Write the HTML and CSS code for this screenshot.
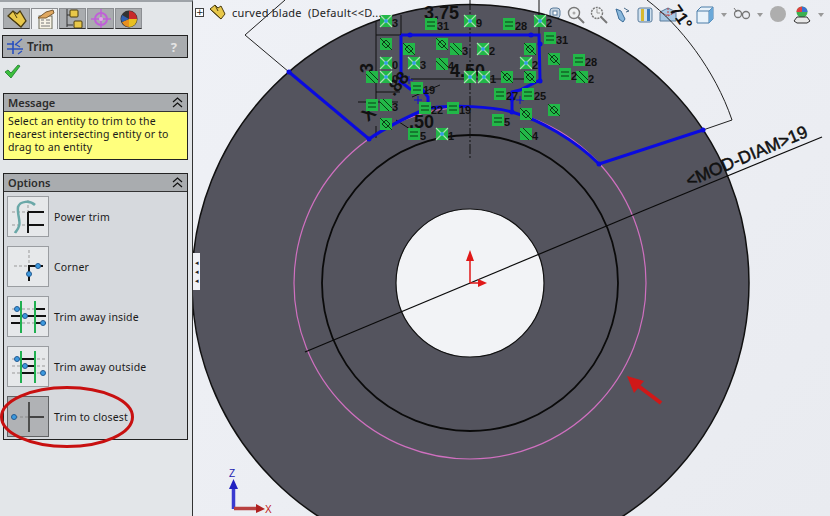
FILE: index.html
```html
<!DOCTYPE html>
<html lang="en">

<head>
    <meta charset="UTF-8">
    <title>Trim</title>
    <link rel="stylesheet" href="styles.css">
</head>

<body>
    <div class="app">
        <aside class="sidebar">
            <div class="tabs">
                <div class="tab">
                    <svg width="24" height="22" viewBox="0 0 24 22"><path d="M3 8l5-5 4 3 3-3 6 10-5 6z" fill="#e8c84a" stroke="#4a3c10" stroke-width="1.300"/><path d="M3 8l13 11M8 3l4 7" stroke="#4a3c10" fill="none"/></svg>
                </div>
                <div class="tab active">
                    <svg width="24" height="22" viewBox="0 0 24 22"><rect x="6" y="8" width="13" height="13" fill="#f7f3e6" stroke="#6a6a5a"/><path d="M8 12h3M8 15h3M13 12h4M13 15h4M8 18h9" stroke="#777"/><path d="M5 10l8-6 7-2 1 3-8 5z" fill="#e0a860" stroke="#7a5a30"/></svg>
                </div>
                <div class="tab">
                    <svg width="24" height="22" viewBox="0 0 24 22"><path d="M6 1v18M6 7h6M6 17h6" stroke="#333" fill="none"/><rect x="9" y="2" width="8" height="7" rx="1" fill="#e8c84a" stroke="#4a3c10"/><rect x="13" y="13" width="8" height="7" rx="1" fill="#e8c84a" stroke="#4a3c10"/></svg>
                </div>
                <div class="tab">
                    <svg width="24" height="22" viewBox="0 0 24 22"><circle cx="12" cy="11" r="6" fill="none" stroke="#c060d8" stroke-width="2"/><path d="M12 1v20M2 11h20" stroke="#c060d8" stroke-width="1.500"/><circle cx="12" cy="11" r="2" fill="#e8a0f0"/></svg>
                </div>
                <div class="tab">
                    <svg width="24" height="22" viewBox="0 0 24 22"><circle cx="12" cy="11" r="8.500" fill="#333"/><path d="M12 11V3a8 8 0 0 1 8 8z" fill="#c82a2a"/><path d="M12 11h8a8 8 0 0 1-8 8z" fill="#e8c020"/><path d="M12 11v8a8 8 0 0 1-7-5z" fill="#e89020"/><path d="M12 11l-7 3a8 8 0 0 1 0-7z" fill="#3060b0"/></svg>
                </div>
            </div>

            <div class="title-bar">
                <svg width="19" height="17" viewBox="0 0 19 17"><path d="M1 6h7M1 11h16M7 3v13" stroke="#2a50c0" stroke-width="1.600" fill="none"/><path d="M9 7l7-6M9 6l5 3M12 16l4-3" stroke="#2a50c0" stroke-width="1.200" fill="none"/></svg>
                <span class="title-text">Trim</span>
                <span class="help">?</span>
            </div>

            <div class="ok-row">
                <svg width="17" height="15" viewBox="0 0 17 15"><path d="M1 8l3-2 3 3 7-8 2 1-9 12z" fill="#3cc03c" stroke="#1c7a2c" stroke-width="0.800"/></svg>
            </div>

            <section class="panel message-panel">
                <div class="panel-head">
                    <span>Message</span>
                    <svg class="chevrons" width="11" height="11" viewBox="0 0 11 11"><path d="M1 5l4.500-4 4.500 4M1 10l4.500-4 4.500 4" fill="none" stroke="#111" stroke-width="1.200"/></svg>
                </div>
                <p class="message">Select an entity to trim to the nearest intersecting entity or to drag to an entity</p>
            </section>

            <section class="panel options-panel">
                <div class="panel-head">
                    <span>Options</span>
                    <svg class="chevrons" width="11" height="11" viewBox="0 0 11 11"><path d="M1 5l4.500-4 4.500 4M1 10l4.500-4 4.500 4" fill="none" stroke="#111" stroke-width="1.200"/></svg>
                </div>
                <ul class="option-list">
                    <li class="option">
                        <span class="option-btn">
                            <svg width="40" height="39" viewBox="0 0 40 39"><path d="M4 15h16M4 28h16M20 3v12" stroke="#999" stroke-dasharray="3 2" fill="none"/><path d="M20 15v21M20 15h16M20 28h16" stroke="#111" stroke-width="2" fill="none"/><path d="M27 8C22 3 12 4 10 10 9 17 13 25 11 29 10 33 8 34 7 36" stroke="#6aa8a8" stroke-width="2.500" fill="none"/></svg>
                        </span>
                        <span>Power trim</span>
                    </li>
                    <li class="option">
                        <span class="option-btn">
                            <svg width="40" height="39" viewBox="1 1 40 39"><path d="M22 4v17M7 20h15" stroke="#999" stroke-dasharray="3 2" fill="none"/><path d="M36 20H22v15" stroke="#111" stroke-width="2" fill="none"/><circle cx="31" cy="20" r="2.500" fill="#3c9ae0" stroke="#245a90"/><circle cx="22" cy="28" r="2.500" fill="#3c9ae0" stroke="#245a90"/></svg>
                        </span>
                        <span>Corner</span>
                    </li>
                    <li class="option">
                        <span class="option-btn">
                            <svg width="40" height="39" viewBox="0 1 40 39"><path d="M4 13h33M4 27h33" stroke="#999" stroke-dasharray="3 2" fill="none"/><path d="M3 20h35M3 27h11M28 13h9M28 27h10" stroke="#111" stroke-width="1.800" fill="none"/><path d="M13 5v32M27 5v32" stroke="#20b050" stroke-width="2" fill="none"/><circle cx="9" cy="13" r="2.500" fill="#3c9ae0" stroke="#245a90"/><circle cx="17" cy="20" r="2.500" fill="#3c9ae0" stroke="#245a90"/><circle cx="35" cy="27" r="2.500" fill="#3c9ae0" stroke="#245a90"/></svg>
                        </span>
                        <span>Trim away inside</span>
                    </li>
                    <li class="option">
                        <span class="option-btn">
                            <svg width="40" height="39" viewBox="0 1 40 39"><path d="M4 13h33M4 20h33M4 27h33" stroke="#999" stroke-dasharray="3 2" fill="none"/><path d="M13 13h14M13 20h14M13 27h14" stroke="#111" stroke-width="1.800" fill="none"/><path d="M13 5v32M27 5v32" stroke="#20b050" stroke-width="2" fill="none"/><circle cx="9" cy="13" r="2.500" fill="#3c9ae0" stroke="#245a90"/><circle cx="17" cy="20" r="2.500" fill="#3c9ae0" stroke="#245a90"/><circle cx="35" cy="27" r="2.500" fill="#3c9ae0" stroke="#245a90"/></svg>
                        </span>
                        <span>Trim away outside</span>
                    </li>
                    <li class="option">
                        <span class="option-btn selected">
                            <svg width="40" height="39" viewBox="1 0 40 39"><path d="M8 20h14" stroke="#8a8a8a" stroke-dasharray="3 2" fill="none"/><path d="M22 5v30M22 20h15" stroke="#444" stroke-width="1.800" fill="none"/><circle cx="7" cy="20" r="2.500" fill="#3c9ae0" stroke="#245a90"/></svg>
                        </span>
                        <span>Trim to closest</span>
                    </li>
                </ul>
            </section>

            <svg class="callout" width="140" height="66" viewBox="0 0 140 66"><ellipse cx="67" cy="33" rx="65.500" ry="29.500" fill="none" stroke="#c81010" stroke-width="3"/></svg>
        </aside>

        <main class="viewport">
            <div class="view-tools">
                <svg class="tool" style="left:356px" width="12" height="14" viewBox="0 0 12 14"><rect x="1" y="2" width="10" height="10" rx="3" fill="#c5d3e0" stroke="#5a7c9c"/><rect x="4" y="5" width="4" height="4" fill="#fff" stroke="#5a7c9c"/></svg>
                <svg class="tool" style="left:374px" width="18" height="18" viewBox="0 0 18 18"><circle cx="7" cy="7" r="5.500" fill="#eef0f2" stroke="#777" stroke-width="1.400"/><path d="M11 11l6 6" stroke="#777" stroke-width="2"/><circle cx="7" cy="7" r="1.500" fill="#aaa"/></svg>
                <svg class="tool" style="left:397px" width="18" height="18" viewBox="0 0 18 18"><circle cx="7" cy="7" r="5.500" fill="#eef0f2" stroke="#777" stroke-width="1.400" stroke-dasharray="2 1"/><path d="M11 11l6 6" stroke="#777" stroke-width="2"/><path d="M7 3v4h3" stroke="#999" fill="none"/></svg>
                <svg class="tool" style="left:420px" width="18" height="18" viewBox="0 0 18 18"><path d="M3 3l5 2 4 8-2 3-4-3z" fill="#8ab8dc" stroke="#3a6c98"/><path d="M11 2l5 3-3 1" stroke="#4a6c88" fill="none"/></svg>
                <svg class="tool" style="left:444px" width="16" height="18" viewBox="0 0 16 18"><rect x="1" y="2" width="14" height="14" rx="2" fill="#cfe0ee" stroke="#5a7c9c"/><rect x="4" y="3" width="3" height="12" fill="#d8b830"/><rect x="10" y="3" width="3" height="12" fill="#3c7cc0"/></svg>
                <svg class="tool" style="left:466px" width="18" height="18" viewBox="0 0 18 18"><path d="M1 6l8-4 8 4v9H1z" fill="#a8c8e4" stroke="#5a7c9c"/><path d="M9 2v8M1 6l8 4 8-4" stroke="#c04040" fill="none" stroke-dasharray="2 1"/></svg>
                <svg class="tool" style="left:503px" width="18" height="18" viewBox="0 0 18 18"><path d="M1 5l4-4h12v12l-4 4H1z" fill="#e8f2fa" stroke="#4a7ca8"/><path d="M1 5h12v12M13 5l4-4" stroke="#4a7ca8" fill="none"/><path d="M13 5l4-4v12l-4 4z" fill="#6aa8d8"/></svg>
                <svg class="tool arrow" style="left:528px" width="6" height="4" viewBox="0 0 6 4"><path d="M0 0h6L3 4z" fill="#999"/></svg>
                <svg class="tool" style="left:540px" width="18" height="14" viewBox="0 0 18 14"><circle cx="5" cy="8" r="3.500" fill="none" stroke="#777" stroke-width="1.300"/><circle cx="13" cy="9" r="3.500" fill="none" stroke="#777" stroke-width="1.300"/><path d="M1 2l3 4M8 8h2" stroke="#777" fill="none"/></svg>
                <svg class="tool arrow" style="left:564px" width="6" height="4" viewBox="0 0 6 4"><path d="M0 0h6L3 4z" fill="#999"/></svg>
                <svg class="tool" style="left:577px" width="16" height="16" viewBox="0 0 16 16"><circle cx="8" cy="8" r="8" fill="#aeaeae"/></svg>
                <svg class="tool" style="left:600px" width="18" height="18" viewBox="0 0 18 18"><circle cx="9" cy="6" r="5.500" fill="#3cb050"/><path d="M9 6V.5A5.500 5.500 0 0 0 3.500 6z" fill="#e04040"/><path d="M9 6h5.500A5.500 5.500 0 0 0 9 .5z" fill="#3a70d0"/><path d="M1 15l3-4h10l3 4-3 2H4z" fill="#e8e8e8" stroke="#333"/></svg>
                <svg class="tool arrow" style="left:625px" width="6" height="4" viewBox="0 0 6 4"><path d="M0 0h6L3 4z" fill="#999"/></svg>
            </div>

            <svg class="scene" viewBox="193 0 637 516" width="637" height="516">
                <defs>
                    <g id="rel-x">
                        <rect x="-6" y="-6" width="12" height="12" fill="#22b848"/>
                        <path d="M-6-6L6 6M6-6L-6 6" stroke="#a8e0b0" stroke-width="1.200"/>
                        <circle r="2" fill="#3aa0e8"/>
                    </g>
                    <g id="rel-diamond">
                        <rect x="-6" y="-6" width="12" height="12" fill="#22b848"/>
                        <path d="M-6-6L6 6M0-4L4 0 0 4-4 0Z" stroke="#0b3b14" fill="none"/>
                    </g>
                    <g id="rel-hatch">
                        <rect x="-6" y="-6" width="12" height="12" fill="#22b848"/>
                        <path d="M-6-3L3 6M-3-6L6 3" stroke="#0b3b14"/>
                    </g>
                    <g id="rel-equal">
                        <rect x="-6" y="-6" width="12" height="12" fill="#22b848"/>
                        <path d="M-4-2H4M-4 2H4" stroke="#0b3b14"/>
                    </g>
                </defs>

                <!-- part -->
                <circle cx="470.500" cy="283" r="278.500" fill="#54545e" stroke="#111" stroke-width="1.500"/>
                <circle cx="470" cy="283" r="176" fill="none" stroke="#d070c0" stroke-width="1.200"/>
                <circle cx="470" cy="283" r="148" fill="none" stroke="#0a0a0a" stroke-width="1.800"/>
                <circle cx="470" cy="283" r="74" fill="#f2f3f6" stroke="#111" stroke-width="1.200"/>
                <path d="M305 352L640 212" stroke="#0a0a0a" stroke-width="1.200"/>
                <path d="M640 212L822 137" stroke="#0a0a0a" stroke-width="1.200"/>
                <path d="M470 0V160" stroke="#111" stroke-dasharray="10 2 2 2"/>

                <!-- dimension lines -->
                <path d="M289 72L245 35 285 0" stroke="#222" fill="none"/>
                <path d="M703 130L732 120C715 70 680 25 647 0" stroke="#222" fill="none"/>
                <path d="M376 35H401M376 22V100M376 92H400M358 102H398M411 79H530M376 126V138M396 120L416 133M440 85L412 97" stroke="#111" fill="none"/>
                <path d="M539 0V35M401 35V15" stroke="#111" fill="none"/>

                <!-- trim result -->
                <path d="M289 72L369 139C382 130 400 120 428 108 455 105 490 106 512 112 540 120 575 140 599 164L703 130" stroke="#0a0ae0" stroke-width="3" fill="none"/>
                <path d="M401 35H539L540 80 520 90 512 92V112M401 35V82L410 89H422L428 97V107" stroke="#0a0ae0" stroke-width="3" fill="none"/>
                <path d="M405 80h8M409 76v8M414 100h8M418 96v8M516 100h8M520 96v8" stroke="#0a0ae0"/>
                <g fill="#0a0ae0">
                    <circle cx="289" cy="72" r="2.500"/>
                    <circle cx="703" cy="130" r="2.500"/>
                    <circle cx="599" cy="164" r="2.500"/>
                    <circle cx="369" cy="139" r="2.500"/>
                    <circle cx="410" cy="35" r="2.500"/>
                    <circle cx="531" cy="35" r="2.500"/>
                    <circle cx="540" cy="44" r="2.500"/>
                    <circle cx="540" cy="81" r="2.500"/>
                    <circle cx="401" cy="82" r="2.500"/>
                    <circle cx="512" cy="112" r="2.500"/>
                    <circle cx="512" cy="99" r="2.500"/>
                </g>

                <!-- dimensions -->
                <g class="dim">
                    <text x="424" y="19">3.75</text>
                    <text x="450" y="77">4.50</text>
                    <text x="409" y="128">.50</text>
                    <text x="373" y="73" transform="rotate(-90 373 73)">3</text>
                    <text x="394" y="97" transform="rotate(-50 394 97)">.88</text>
                    <text x="368" y="122" transform="rotate(-40 368 122)">X</text>
                    <text class="angle" x="669" y="10" transform="rotate(55 669 10)">71°</text>
                    <text class="mod" x="689" y="187" transform="rotate(-23 689 187)">&lt;MOD-DIAM&gt;19</text>
                </g>

                <!-- sketch relations -->
                <use href="#rel-x" x="386" y="21"/>
                <use href="#rel-x" x="470" y="21"/>
                <use href="#rel-x" x="540" y="21"/>
                <use href="#rel-x" x="386" y="63"/>
                <use href="#rel-x" x="386" y="77"/>
                <use href="#rel-x" x="414" y="63"/>
                <use href="#rel-x" x="483" y="49"/>
                <use href="#rel-x" x="526" y="63"/>
                <use href="#rel-x" x="470" y="77"/>
                <use href="#rel-x" x="484" y="77"/>
                <use href="#rel-x" x="442" y="134"/>
                <use href="#rel-diamond" x="386" y="44"/>
                <use href="#rel-diamond" x="409" y="49"/>
                <use href="#rel-diamond" x="442" y="44"/>
                <use href="#rel-diamond" x="530" y="49"/>
                <use href="#rel-diamond" x="554" y="59"/>
                <use href="#rel-diamond" x="507" y="77"/>
                <use href="#rel-diamond" x="530" y="77"/>
                <use href="#rel-diamond" x="386" y="124"/>
                <use href="#rel-diamond" x="526" y="114"/>
                <use href="#rel-diamond" x="554" y="110"/>
                <use href="#rel-hatch" x="456" y="49"/>
                <use href="#rel-hatch" x="442" y="64"/>
                <use href="#rel-hatch" x="372" y="77"/>
                <use href="#rel-hatch" x="386" y="105"/>
                <use href="#rel-hatch" x="526" y="134"/>
                <use href="#rel-hatch" x="582" y="77"/>
                <use href="#rel-equal" x="431" y="24"/>
                <use href="#rel-equal" x="509" y="24"/>
                <use href="#rel-equal" x="550" y="38"/>
                <use href="#rel-equal" x="579" y="60"/>
                <use href="#rel-equal" x="565" y="74"/>
                <use href="#rel-equal" x="417" y="88"/>
                <use href="#rel-equal" x="500" y="94"/>
                <use href="#rel-equal" x="528" y="94"/>
                <use href="#rel-equal" x="372" y="105"/>
                <use href="#rel-equal" x="425" y="108"/>
                <use href="#rel-equal" x="453" y="108"/>
                <use href="#rel-equal" x="498" y="120"/>
                <use href="#rel-equal" x="414" y="134"/>
                <g class="rel-num">
                    <text x="392" y="27">3</text>
                    <text x="476" y="27">9</text>
                    <text x="546" y="27">2</text>
                    <text x="392" y="69">0</text>
                    <text x="392" y="83">0</text>
                    <text x="420" y="69">3</text>
                    <text x="489" y="55">2</text>
                    <text x="532" y="69">2</text>
                    <text x="490" y="83">1</text>
                    <text x="448" y="140">1</text>
                    <text x="462" y="55">3</text>
                    <text x="448" y="70">4</text>
                    <text x="392" y="111">3</text>
                    <text x="532" y="140">4</text>
                    <text x="588" y="83">2</text>
                    <text x="437" y="30">31</text>
                    <text x="515" y="30">28</text>
                    <text x="556" y="44">31</text>
                    <text x="585" y="66">28</text>
                    <text x="571" y="80">2</text>
                    <text x="423" y="94">19</text>
                    <text x="506" y="100">27</text>
                    <text x="534" y="100">25</text>
                    <text x="431" y="114">22</text>
                    <text x="459" y="114">19</text>
                    <text x="504" y="126">5</text>
                    <text x="420" y="140">5</text>
                </g>

                <!-- origin -->
                <path d="M470 283V253" stroke="#e01818" stroke-width="1.500"/>
                <path d="M466 261L470 250 474 261Z" fill="#e01818"/>
                <path d="M470 283H480" stroke="#e01818" stroke-width="1.500"/>
                <path d="M478 279L487 283 478 287Z" fill="#e01818"/>

                <!-- red arrow -->
                <path d="M661 403L637 385" stroke="#d01818" stroke-width="4"/>
                <path d="M627 376L644 381 634 393Z" fill="#d01818"/>

                <!-- triad -->
                <path d="M233.500 509V485" stroke="#3a3ad0" stroke-width="3.500"/>
                <path d="M229 489L233.500 479 238 489Z" fill="#2020c0"/>
                <path d="M234 508.500H258" stroke="#b84040" stroke-width="3.500"/>
                <path d="M256 504L265 509 256 513Z" fill="#b02020"/>
                <text class="axis z" x="229" y="477">Z</text>
                <text class="axis x" x="265" y="513">X</text>
            </svg>

            <div class="splitter">
                <span class="grip">&#9666;</span>
                <span class="grip">&#9666;</span>
                <span class="grip">&#9666;</span>
            </div>

            <div class="tree-row">
                <span class="expander">+</span>
                <svg width="18" height="18" viewBox="0 0 18 18"><path d="M1 6l5-4 3 3 3-2 4 8-4 5z" fill="#e8c84a" stroke="#4a3c10"/><path d="M1 6l11 10M6 2l3 6" stroke="#4a3c10" fill="none"/></svg>
                <span class="tree-label">curved blade&nbsp; (Default&lt;&lt;D...</span>
            </div>
        </main>
    </div>
</body>

</html>
```

FILE: styles.css
```css
* {
    margin: 0;
    padding: 0;
    box-sizing: border-box;
}

body {
    width: 830px;
    height: 516px;
    overflow: hidden;
    font-family: "Noto Sans", Arial, sans-serif;
    font-size: 10.5px;
    color: #1a1a1a;
    background-color: #e3e6e9;
}

.app {
    display: flex;
    height: 516px;
}

.sidebar {
    position: relative;
    width: 193px;
    flex-shrink: 0;
    padding: 8px 4px 0 2px;
    background-color: #e3e6e9;
    border-top: 2px solid #9ea3a8;
    border-right: 1px solid #333;
}

.tabs {
    display: flex;
    height: 20px;
    margin-left: 1px;
    margin-top: -2px;
    gap: 1px;
}

.tab {
    display: flex;
    align-items: center;
    justify-content: center;
    width: 27px;
    height: 21px;
    background-color: #a9acaf;
    border: 1px solid #8c8f93;
    border-bottom-color: #333;
    overflow: hidden;
}

.tab.active {
    background-color: #eef0f2;
    border-bottom: none;
}

.title-bar {
    display: flex;
    align-items: center;
    gap: 2px;
    height: 23px;
    margin-top: 7px;
    padding: 0 5px 0 3px;
    font-size: 12px;
    font-weight: 600;
    color: #2b2b2b;
    background-color: #a9acaf;
    border: 1px solid #222;
}

.help {
    margin-left: auto;
    margin-right: 5px;
    font-size: 13px;
    font-weight: 700;
    color: #e4e4e4;
}

.ok-row {
    height: 35px;
    padding: 6px 0 0 2px;
}

.panel {
    margin-left: 1px;
    border: 1px solid #222;
}

.panel-head {
    display: flex;
    align-items: center;
    justify-content: space-between;
    height: 18px;
    padding: 0 4px;
    font-size: 11px;
    font-weight: 600;
    color: #2b2b2b;
    background-color: #a9acaf;
    border-bottom: 1px solid #333;
}

.message {
    height: 47px;
    padding: 3px 4px 0;
    line-height: 13px;
    letter-spacing: 0.15px;
    background-color: #ffff7d;
}

.options-panel {
    margin-top: 13px;
    background-color: #d6d9dd;
}

.option-list {
    list-style: none;
    display: flex;
    flex-direction: column;
    gap: 9px;
    padding: 4px 3px 2px;
}

.option {
    display: flex;
    align-items: center;
    gap: 5px;
    height: 41px;
    letter-spacing: 0.15px;
}

.option-btn {
    display: block;
    width: 42px;
    height: 41px;
    background-color: #e6e8ea;
    border: 1px solid #9a9da1;
}

.option-btn.selected {
    background-color: #b0b2b5;
    border-color: #606264;
}

.callout {
    position: absolute;
    left: 0;
    top: 382px;
}

.viewport {
    position: relative;
    flex: 1;
    height: 516px;
    overflow: hidden;
    background: linear-gradient(135deg, #eff1f6, #e9ebf0);
}

.scene {
    position: relative;
    display: block;
}

.dim text {
    font-family: "Liberation Sans", Arial, sans-serif;
    font-size: 18px;
    font-weight: 700;
    fill: #111;
}

.dim .angle {
    font-size: 17px;
}

.dim .mod {
    font-size: 17.5px;
    font-weight: 400;
    stroke: #111;
    stroke-width: 0.5px;
}

.rel-num text {
    font-family: "Liberation Sans", Arial, sans-serif;
    font-size: 11px;
    font-weight: 700;
    fill: #111;
}

.axis {
    font-family: "Liberation Sans", Arial, sans-serif;
    font-size: 10px;
}

.axis.z {
    fill: #2020b0;
}

.axis.x {
    fill: #c02020;
}

.splitter {
    position: absolute;
    left: 0;
    top: 253px;
    display: flex;
    flex-direction: column;
    justify-content: center;
    width: 7px;
    height: 37px;
    font-size: 7px;
    line-height: 9px;
    color: #222;
    background-color: #eff1f6;
}

.grip {
    display: block;
    text-align: center;
}

.tree-row {
    position: absolute;
    left: 2px;
    top: 3px;
    display: flex;
    align-items: center;
    gap: 2px;
    font-size: 11px;
    letter-spacing: 0.25px;
    color: #222;
}

.expander {
    display: block;
    width: 9px;
    height: 9px;
    margin-right: 3px;
    font-family: "DejaVu Sans", sans-serif;
    font-size: 9px;
    line-height: 7px;
    text-align: center;
    background-color: #fff;
    border: 1px solid #444;
}

.tree-label {
    margin-left: 3px;
}

.view-tools {
    position: absolute;
    left: 0;
    top: 0;
    width: 100%;
    height: 30px;
}

.tool {
    position: absolute;
    top: 6px;
}

.tool.arrow {
    top: 13px;
}
```
